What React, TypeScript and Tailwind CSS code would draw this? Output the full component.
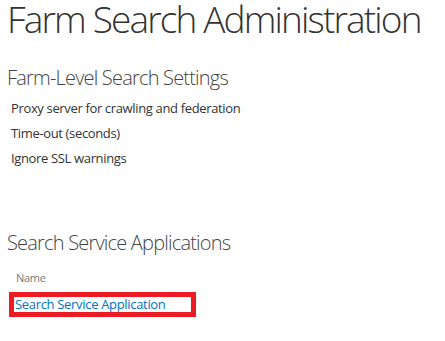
export default function App() {
  return (
    <main
      className="min-h-screen bg-white pl-[7px] text-[#444]"
      style={{ fontFamily: '"Open Sans", "Noto Sans", sans-serif' }}
    >
      {/* Page title */}
      <h1 className="text-[37px] leading-[38px] font-light tracking-[-1.85px] text-[#333] whitespace-nowrap">
        Farm Search Administration
      </h1>

      {/* Farm-level settings */}
      <h2 className="mt-[28px] text-[20px] leading-[24px] font-light tracking-[-0.8px] text-[#444]">
        Farm-Level Search Settings
      </h2>
      <ul className="mt-[6px] ml-[4px] text-[13px] leading-[25px] tracking-[-0.35px] text-[#333]">
        <li>Proxy server for crawling and federation</li>
        <li>Time-out (seconds)</li>
        <li>Ignore SSL warnings</li>
      </ul>

      {/* Service applications */}
      <h2 className="mt-[60px] text-[20px] leading-[24px] font-light tracking-[-0.8px] text-[#444]">
        Search Service Applications
      </h2>
      <div className="mt-[16px] ml-[9px] text-[11px] leading-[14px] tracking-[-0.3px] text-[#777]">Name</div>
      <div className="mt-[7px] ml-[2px] w-[187px] border-[5px] border-[#ed1c24] py-px pl-[1px]">
        <a href="#" className="block text-[13px] leading-[13px] tracking-[-0.32px] text-[#0072c6] whitespace-nowrap">
          Search Service Application
        </a>
      </div>
    </main>
  );
}
